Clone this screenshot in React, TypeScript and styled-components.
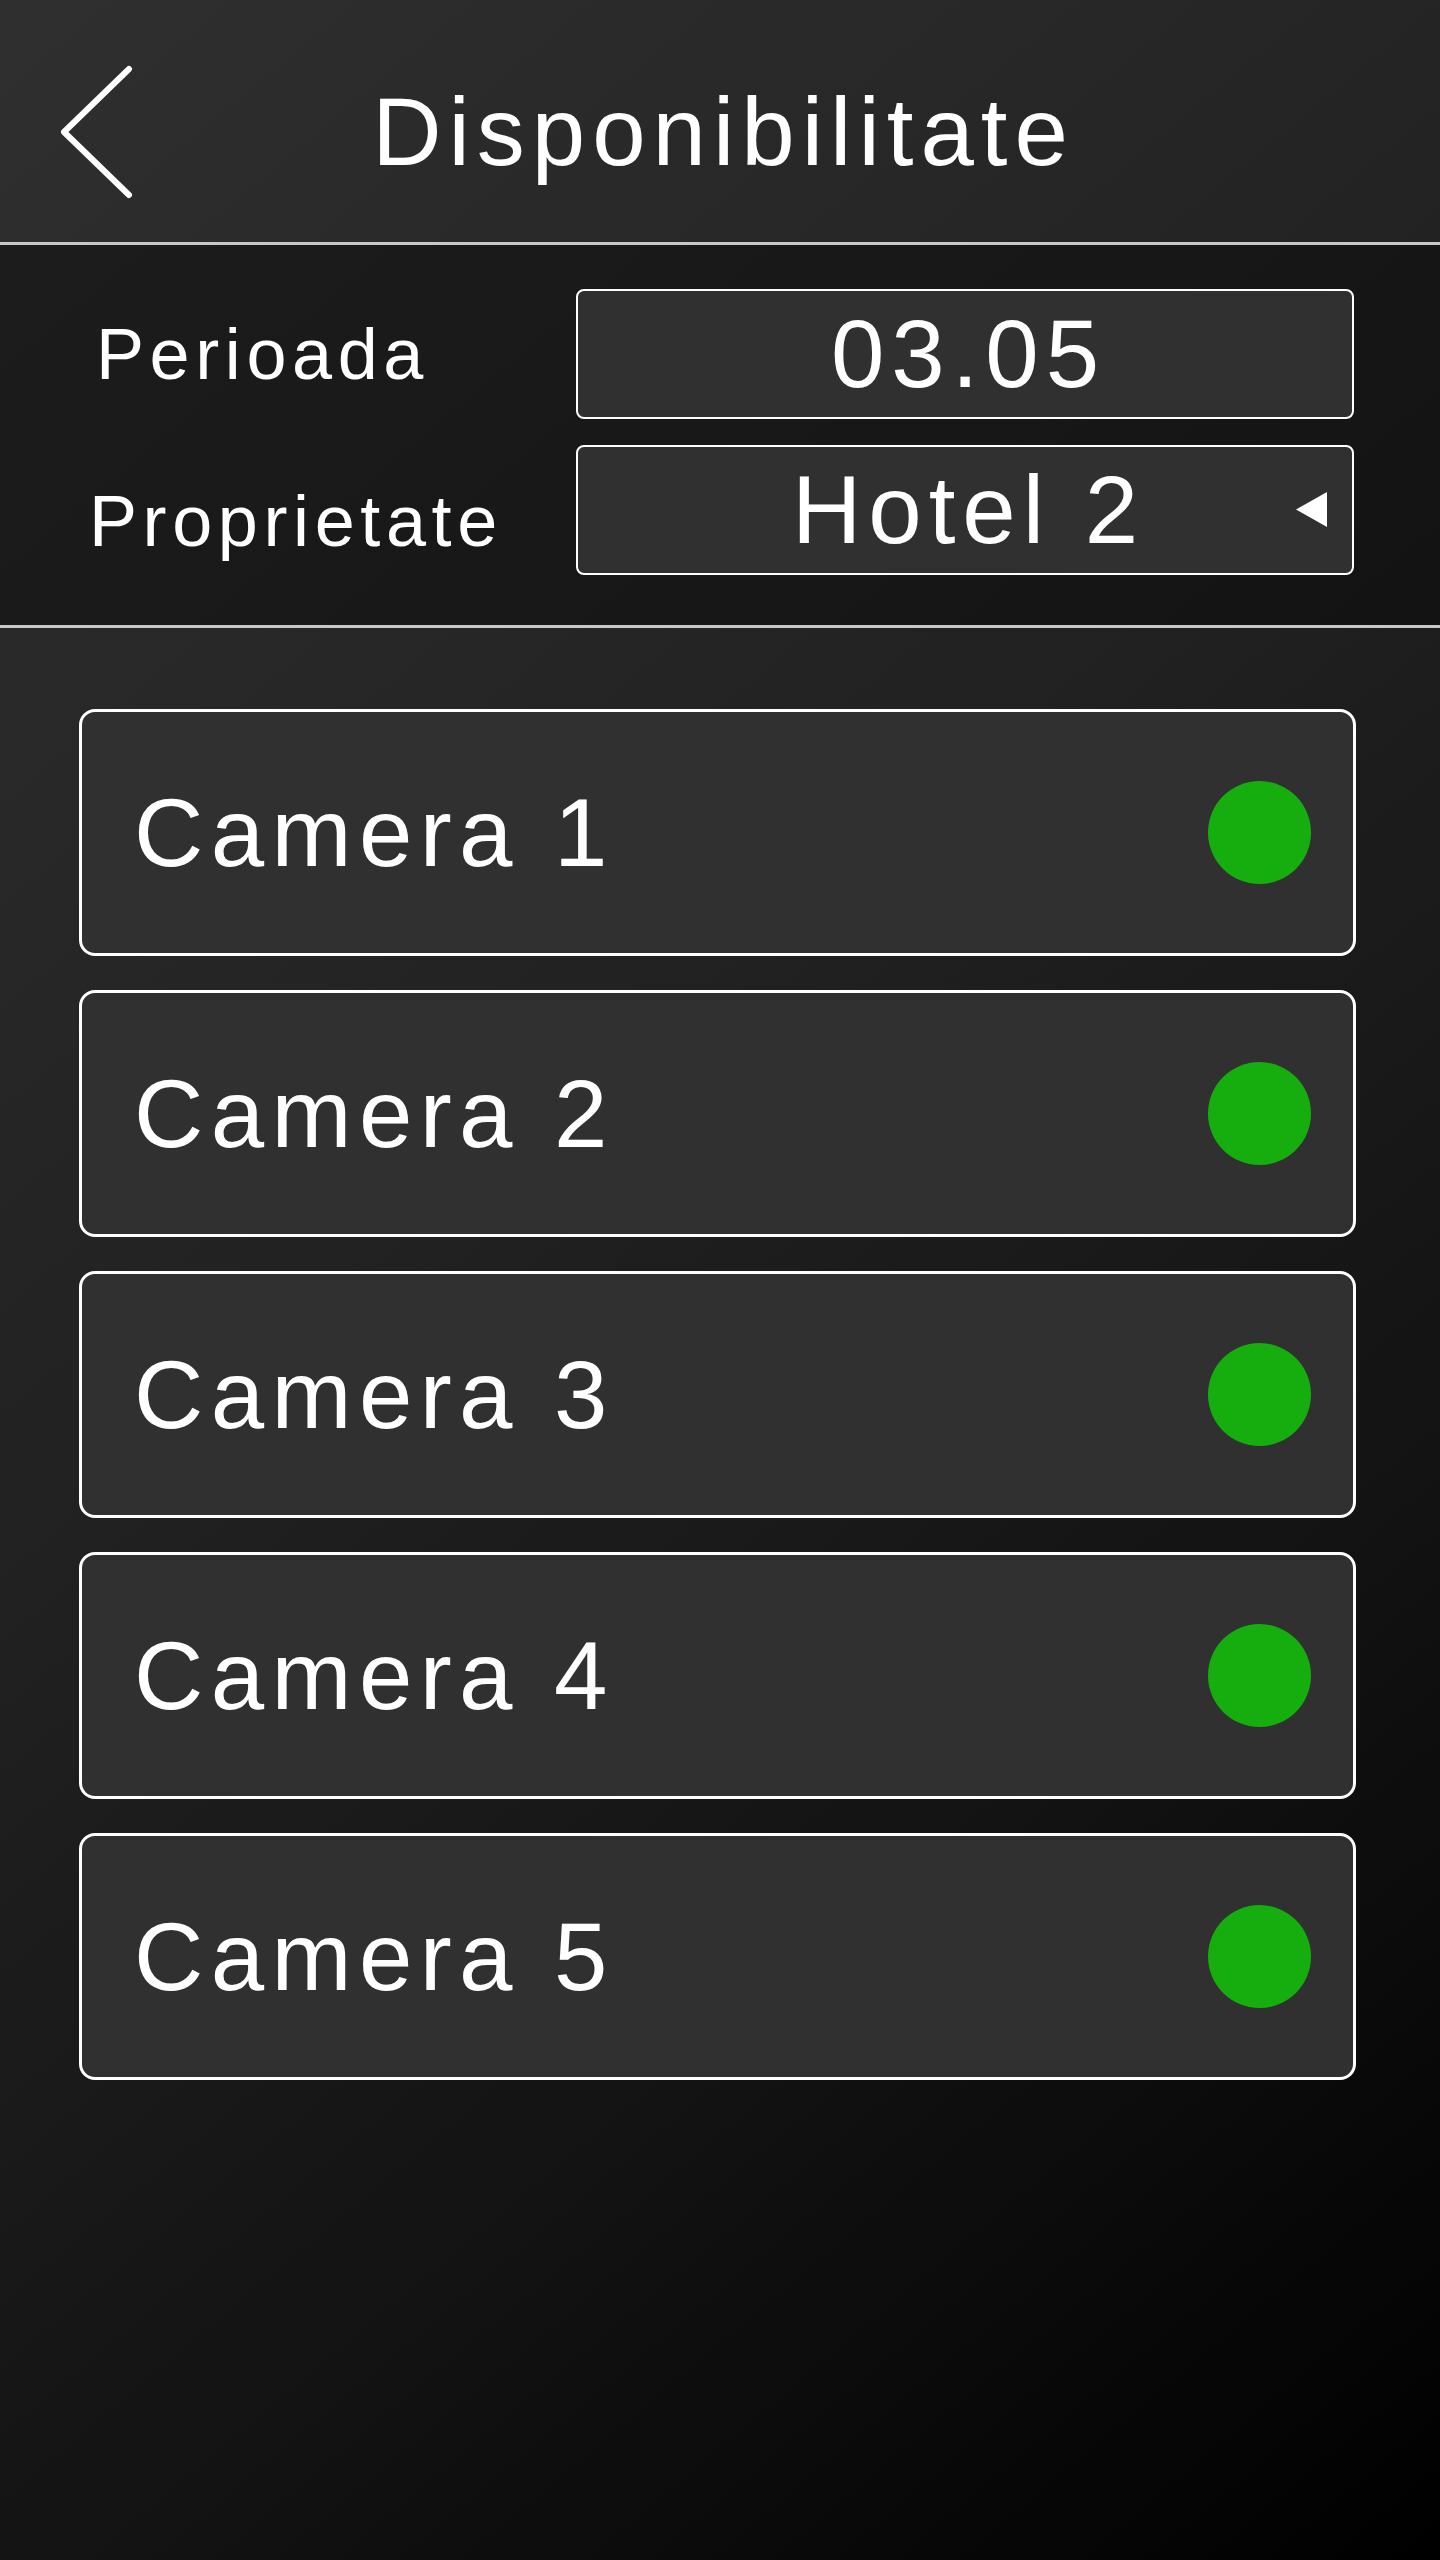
import * as React from 'react';
import styled, { createGlobalStyle } from 'styled-components';

const GlobalStyle = createGlobalStyle`
    html, body {
        margin: 0;
        padding: 0;
        height: 100%;
    }
    body {
        font-family: 'Liberation Sans', Arial, sans-serif;
        color: #FFF;
    }
`;

const Page = styled.div`
    min-height: 100vh;
    background: linear-gradient(140deg, #2f2f2f 0%, #222222 40%, #131313 70%, #000000 100%);
    display: flex;
    flex-direction: column;
`;

const Header = styled.header`
    height: 245px;
    box-sizing: border-box;
    padding-top: 22px;
    display: grid;
    grid-template-columns: 1fr auto 1fr;
    align-items: center;
    border-bottom: 3px solid #c8c8c8;
`;

const BackButton = styled.button`
    justify-self: start;
    margin-left: 60px;
    padding: 0;
    border: none;
    background: none;
    display: flex;
    cursor: pointer;
`;

const Title = styled.h1`
    margin: 0;
    padding-left: 7px;
    font-size: 96px;
    font-weight: normal;
    letter-spacing: 7px;
    line-height: 1;
`;

const Filters = styled.section`
    background: rgba(0, 0, 0, 0.36);
    padding: 44px 86px 50px 0;
    display: grid;
    grid-template-columns: 576px 1fr;
    row-gap: 26px;
    align-items: center;
    border-bottom: 3px solid #c8c8c8;
`;

const Label = styled.span<{ $indent: number; $drop?: number }>`
    padding-left: ${p => p.$indent}px;
    padding-top: ${p => p.$drop || 0}px;
    font-size: 72px;
    letter-spacing: 5.6px;
    line-height: 1;
`;

const Field = styled.div`
    height: 130px;
    box-sizing: border-box;
    border: 2px solid #FFF;
    border-radius: 8px;
    background: #303030;
    display: grid;
    grid-template-columns: 1fr auto 1fr;
    align-items: center;
`;

const FieldValue = styled.span`
    grid-column: 2/3;
    padding-left: 7px;
    font-size: 96px;
    letter-spacing: 7px;
    line-height: 1;
`;

const Caret = styled.svg`
    grid-column: 3/4;
    justify-self: end;
    margin-right: 24px;
`;

const RoomList = styled.div`
    padding: 81px 84px 0 79px;
    display: flex;
    flex-direction: column;
    gap: 34px;
`;

const RoomCard = styled.div`
    height: 247px;
    box-sizing: border-box;
    border: 3px solid #FFF;
    border-radius: 16px;
    background: #303030;
    padding: 0 42px 0 52px;
    display: flex;
    align-items: center;
    justify-content: space-between;
`;

const RoomName = styled.span`
    font-size: 96px;
    letter-spacing: 7.4px;
    line-height: 1;
`;

const StatusDot = styled.span<{ $free: boolean }>`
    width: 103px;
    height: 103px;
    border-radius: 50%;
    background: ${p => (p.$free ? '#15ae0e' : '#c62828')};
`;

const rooms = [
    { name: 'Camera 1', free: true },
    { name: 'Camera 2', free: true },
    { name: 'Camera 3', free: true },
    { name: 'Camera 4', free: true },
    { name: 'Camera 5', free: true }
];

export default function App() {
    return (
        <>
            <GlobalStyle />
            <Page>
                <Header>
                    <BackButton aria-label="Înapoi">
                        <svg width="76" height="140" viewBox="0 0 76 140">
                            <polyline
                                points="69,7 4,70 69,133"
                                fill="none"
                                stroke="#FFF"
                                strokeWidth="6"
                                strokeLinecap="round"
                                strokeLinejoin="round"
                            />
                        </svg>
                    </BackButton>
                    <Title>Disponibilitate</Title>
                </Header>

                <Filters>
                    <Label $indent={96}>Perioada</Label>
                    <Field>
                        <FieldValue>03.05</FieldValue>
                    </Field>
                    <Label $indent={89} $drop={22}>Proprietate</Label>
                    <Field>
                        <FieldValue>Hotel 2</FieldValue>
                        <Caret width="32" height="36" viewBox="0 0 32 36">
                            <polygon points="0,17.5 31,0 31,35" fill="#FFF" />
                        </Caret>
                    </Field>
                </Filters>

                <RoomList>
                    {rooms.map(room => (
                        <RoomCard key={room.name}>
                            <RoomName>{room.name}</RoomName>
                            <StatusDot $free={room.free} />
                        </RoomCard>
                    ))}
                </RoomList>
            </Page>
        </>
    );
}
